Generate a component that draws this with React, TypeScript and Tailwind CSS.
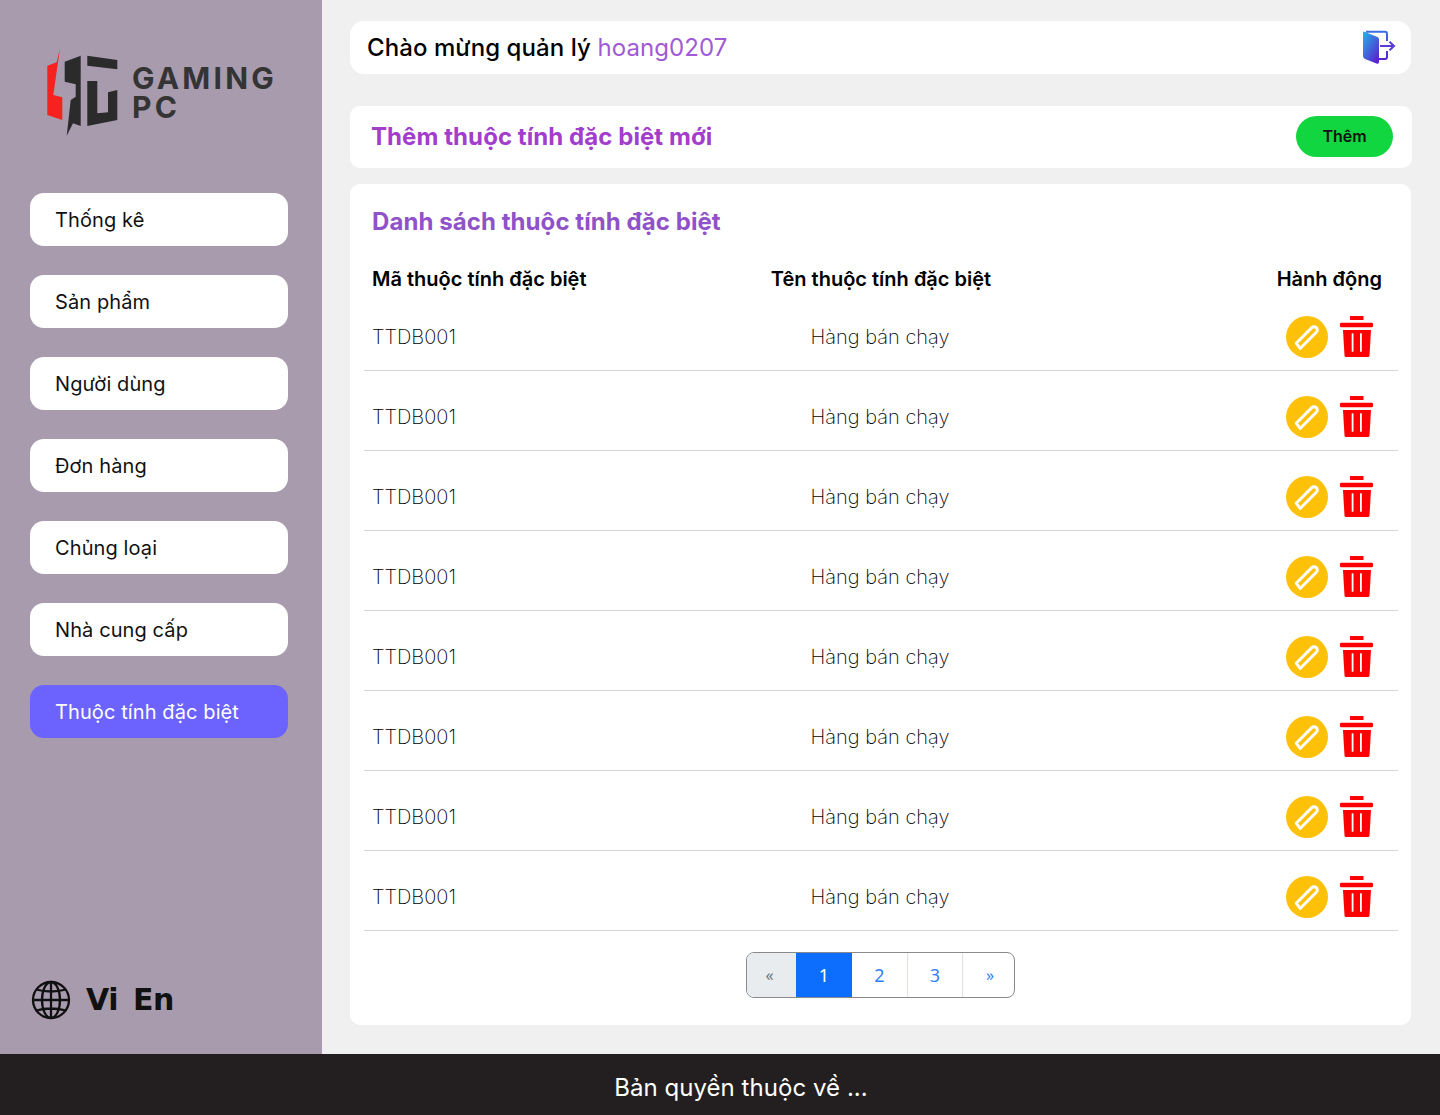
const menu = ["Thống kê", "Sản phẩm", "Người dùng", "Đơn hàng", "Chủng loại", "Nhà cung cấp", "Thuộc tính đặc biệt"];
const rows = [0, 1, 2, 3, 4, 5, 6, 7];

function Logo() {
  return (
    <div className="flex items-center h-[90px] ml-[46px] mt-[47px]">
      <svg width="73" height="90" viewBox="0 0 73 90" className="shrink-0">
        <path d="M14 1.300 L10.700 15.300 L1.300 18.700 L1.300 68 L16.300 73 L16.300 50.300 L7.300 48 Z" fill="#f5221f" />
        <path d="M18.700 14.700 L34.700 8.700 L34.700 79 L27 76.300 L20.700 88.700 L24.700 53 L29.700 49.700 L29.700 37.300 L18.700 34.700 Z" fill="#2b2b2b" />
        <path d="M41.300 8.700 L71.300 13 L71.300 22.300 L41.300 18.700 Z M41.300 34 L51.300 34 L51.300 66.300 L62 65.300 L62 45.300 L71.300 43 L71.300 73 L41.300 79 Z" fill="#2b2b2b" />
      </svg>
      <div className="ml-[13px] flex flex-col font-['Inter',sans-serif] font-bold text-[#343434] leading-[29px] text-[30px] tracking-[3.2px] mt-[1px]">
        <span>GAMING</span>
        <span>PC</span>
      </div>
    </div>
  );
}

function EditIcon() {
  return (
    <span className="w-[42px] h-[42px] rounded-full bg-[#ffc107] flex items-center justify-center">
      <svg width="42" height="42" viewBox="0 0 42 42">
        <g transform="translate(21 21) rotate(-45)">
          <path d="M-13 3.200 L-12 -3.200 H10 A3.200 3.200 0 0 1 10 3.200 Z" fill="none" stroke="#fff" strokeWidth="3" strokeLinejoin="round" />
        </g>
      </svg>
    </span>
  );
}

function TrashIcon() {
  return (
    <svg width="33" height="41" viewBox="0 0 33 41" className="-mt-px">
      <rect x="10" y="0" width="13.500" height="4" fill="#ff0000" />
      <rect x="0" y="6.700" width="33" height="4.600" rx="1" fill="#ff0000" />
      <path d="M3 14 H31 L29.500 39.500 Q29.400 41 28 41 H6 Q4.600 41 4.500 39.500 Z" fill="#ff0000" />
      <rect x="11.700" y="17.300" width="1.800" height="18.400" fill="#fff" />
      <rect x="20" y="17.300" width="1.800" height="18.400" fill="#fff" />
    </svg>
  );
}

function DoorIcon() {
  return (
    <svg width="34" height="36" viewBox="0 0 34 36">
      <defs>
        <linearGradient id="door" x1="0" y1="0" x2="0.8" y2="1">
          <stop offset="0" stopColor="#22b5ea" />
          <stop offset="1" stopColor="#5a22d0" />
        </linearGradient>
        <linearGradient id="frame" x1="0" y1="0" x2="0" y2="1">
          <stop offset="0" stopColor="#3b6fe0" />
          <stop offset="1" stopColor="#5a22d0" />
        </linearGradient>
      </defs>
      <path d="M1 2.500 Q1 1 3 2 L15.500 7 Q17 7.800 17 9.500 L17 32 Q17 34.500 14.500 33.500 L3 29 Q1 28.200 1 26 Z" fill="url(#door)" />
      <path d="M4 1.800 H23 Q25 1.800 25 4 V11 M25 21 V26.500 Q25 29 23 29 H17" fill="none" stroke="url(#frame)" strokeWidth="2" />
      <path d="M18 16 H31.500 M27.500 11.800 L32 16 L27.500 20.200" fill="none" stroke="#5a3ad8" strokeWidth="2" />
    </svg>
  );
}

function GlobeIcon() {
  return (
    <svg width="40" height="40" viewBox="0 0 40 40" fill="none" stroke="#111" strokeWidth="2.300">
      <circle cx="20" cy="20" r="18" />
      <ellipse cx="20" cy="20" rx="9" ry="18" />
      <path d="M20 2 V38 M2 20 H38 M5 9.500 Q20 13.500 35 9.500 M5 30.500 Q20 26.500 35 30.500" />
    </svg>
  );
}

export default function App() {
  return (
    <div className="w-[1440px] h-[1115px] flex flex-col bg-[#f0f0f0] font-['Inter',sans-serif] overflow-hidden">
      <div className="flex h-[1054px]">
        <aside className="w-[322px] shrink-0 bg-[#a89bae] flex flex-col">
          <Logo />
          <nav className="flex flex-col gap-[29px] mt-[56px] ml-[30px]">
            {menu.map((m, i) => (
              <div
                key={m}
                className={`w-[258px] h-[53px] rounded-[14px] flex items-center pl-[25px] text-[20px] tracking-[0.1px] ${i === 6 ? "bg-[#6c63ff] text-white" : "bg-white text-[#111]"}`}
              >
                {m}
              </div>
            ))}
          </nav>
          <div className="mt-auto mb-[34px] ml-[31px] flex items-center">
            <GlobeIcon />
            <span className="ml-[15px] font-['DejaVu_Sans',sans-serif] font-bold text-[30px] tracking-[-0.5px] leading-[40px] text-[#111] pt-[1px]">Vi</span>
            <span className="ml-[15px] font-['DejaVu_Sans',sans-serif] font-bold text-[30px] tracking-[-0.5px] leading-[40px] text-[#111] pt-[1px]">En</span>
          </div>
        </aside>
        <main className="flex-1 min-w-0 pl-[28px] pr-[29px] pt-[21px]">
          <header className="h-[53px] bg-white rounded-[14px] flex items-center justify-between pl-[17px] pr-[15px]">
            <div className="text-[24px] font-medium text-black tracking-[0.08px]">
              Chào mừng quản lý <span className="font-normal text-[#a05ad6] tracking-[0.1px]">hoang0207</span>
            </div>
            <DoorIcon />
          </header>
          <section className="mt-[32px] h-[62px] bg-white rounded-[10px] flex items-center justify-between pl-[21px] pr-[19px] -mr-px">
            <h2 className="text-[24px] font-bold text-[#a23dcc] tracking-[0.07px]">Thêm thuộc tính đặc biệt mới</h2>
            <button className="w-[97px] h-[41px] mb-px pb-px rounded-full bg-[#12d63f] text-[16px] font-semibold text-[#111]">Thêm</button>
          </section>
          <section className="mt-[16px] h-[841px] bg-white rounded-[10px] pl-[14px] pr-[13px] pt-[23px]">
            <h2 className="text-[24px] font-bold text-[#8f52c8] leading-[29px] pl-2 tracking-[0.07px]">Danh sách thuộc tính đặc biệt</h2>
            <div className="grid grid-cols-[398px_238px_1fr] mt-[28px] mb-[3px] h-[24px] items-center text-[20px] font-semibold text-black">
              <div className="pl-2">Mã thuộc tính đặc biệt</div>
              <div className="text-center">Tên thuộc tính đặc biệt</div>
              <div className="text-right pr-4">Hành động</div>
            </div>
            {rows.map((r) => (
              <div
                key={r}
                className="grid grid-cols-[398px_238px_1fr] h-[80px] items-center pt-[13px] border-b border-[#d6d6d6] text-[20px] font-extralight text-black"
              >
                <div className="pl-2">TTDB001</div>
                <div className="text-center pr-[2px]">Hàng bán chạy</div>
                <div className="flex justify-end items-center gap-[12px] pr-[25px]">
                  <EditIcon />
                  <TrashIcon />
                </div>
              </div>
            ))}
            <div className="mt-[21px] flex justify-center -ml-[1px]">
              <div className="flex h-[46px] w-[269px] rounded-[8px] border border-[#8a8a8a] overflow-hidden text-[18px] font-['Noto_Sans',sans-serif]">
                <div className="w-[49px] pr-[4px] bg-[#e9ecef] text-[#6c757d] flex items-center justify-center text-[16px]">«</div>
                <div className="w-[56px] bg-[#0d6efd] text-white flex items-center justify-center">1</div>
                <div className="w-[55px] text-[#2f7ffd] flex items-center justify-center">2</div>
                <div className="w-[55px] border-l border-[#dee2e6] text-[#2f7ffd] flex items-center justify-center">3</div>
                <div className="flex-1 pl-[3px] border-l border-[#dee2e6] text-[#2f7ffd] flex items-center justify-center text-[16px]">»</div>
              </div>
            </div>
          </section>
        </main>
      </div>
      <footer className="h-[61px] bg-[#231f20] flex items-center justify-center pl-[42px] pt-[7px] text-white text-[24px] tracking-[0.05px]">
        Bản quyền thuộc về ...
      </footer>
    </div>
  );
}
